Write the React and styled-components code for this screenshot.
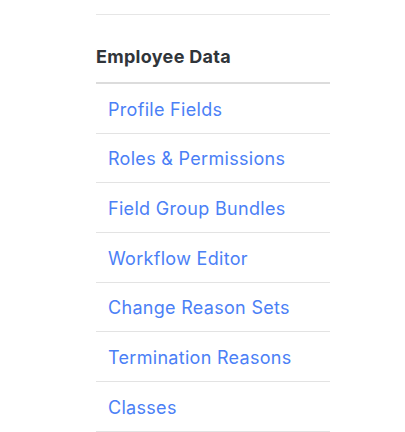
import React from 'react'
import styled, { createGlobalStyle } from 'styled-components'

const GlobalStyle = createGlobalStyle`
    html, body {
        margin: 0;
        padding: 0;
        background: #ffffff;
    }
    body {
        font-family: Inter, "Open Sans", "Liberation Sans", sans-serif;
    }
`;

const Page = styled.div`
    width: 405px;
    height: 432px;
    overflow: hidden;
    padding: 14px 0 0 96px;
    box-sizing: border-box;
`;

const Nav = styled.nav`
    width: 234px;
    border-top: 1px solid #e6e6e6;
`;

const SectionTitle = styled.h3`
    margin: 0;
    margin-top: 25px;
    height: 44px;
    padding-top: 5px;
    line-height: 24px;
    font-size: 18px;
    font-weight: 700;
    letter-spacing: 0.3px;
    color: #30353a;
    border-bottom: 2px solid #dcdcdc;
    box-sizing: border-box;
`;

const List = styled.ul`
    list-style: none;
    margin: 0;
    padding: 0;
`;

const Item = styled.li`
    height: 49.67px;
    box-sizing: border-box;
    display: flex;
    align-items: center;
    padding: 2px 0 0 12px;
    border-bottom: 1px solid #e3e3e3;
`;

const Link = styled.a`
    color: #4b80f6;
    font-size: 18px;
    letter-spacing: 0.3px;
    text-decoration: none;
    cursor: pointer;
`;

const links = [
    'Profile Fields',
    'Roles & Permissions',
    'Field Group Bundles',
    'Workflow Editor',
    'Change Reason Sets',
    'Termination Reasons',
    'Classes',
]

export default function App() {
    return (
        <Page>
            <GlobalStyle />
            <Nav>
                <SectionTitle>Employee Data</SectionTitle>
                <List>
                    {links.map(label => (
                        <Item key={label}>
                            <Link>{label}</Link>
                        </Item>
                    ))}
                </List>
            </Nav>
        </Page>
    )
}
